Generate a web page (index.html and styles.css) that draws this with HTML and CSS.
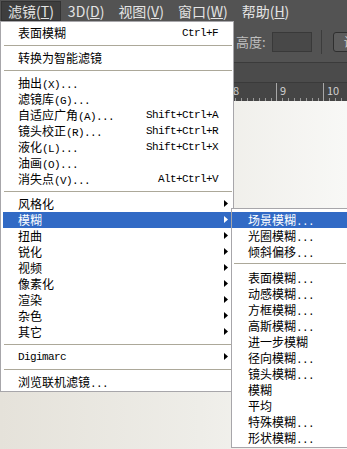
FILE: index.html
```html
<!DOCTYPE html>
<html lang="zh-CN">
<head>
  <meta charset="UTF-8" />
  <title>滤镜</title>
  <link rel="stylesheet" href="styles.css">
</head>
<body>

<div class="app">
  <nav class="menubar">
    <span class="open">滤镜(<u>T</u>)</span>
    <span>3D(<u>D</u>)</span>
    <span>视图(<u>V</u>)</span>
    <span>窗口(<u>W</u>)</span>
    <span>帮助(<u>H</u>)</span>
  </nav>
  <div class="options">
    <span class="label">高度:</span>
    <span class="field"></span>
    <span class="vr"></span>
    <span class="btn">设</span>
  </div>
  <div class="band"></div>
  <div class="ruler">
    <span>8</span><span>9</span><span>10</span>
  </div>
  <div class="desk"></div>
</div>

<div class="menu">
  <div class="item"><span>表面模糊</span><span class="key">Ctrl+F</span></div>
  <div class="sep"></div>
  <div class="item"><span>转换为智能滤镜</span></div>
  <div class="sep"></div>
  <div class="item"><span>抽出<span class="a">(X)...</span></span></div>
  <div class="item"><span>滤镜库<span class="a">(G)...</span></span></div>
  <div class="item"><span>自适应广角<span class="a">(A)...</span></span><span class="key">Shift+Ctrl+A</span></div>
  <div class="item"><span>镜头校正<span class="a">(R)...</span></span><span class="key">Shift+Ctrl+R</span></div>
  <div class="item"><span>液化<span class="a">(L)...</span></span><span class="key">Shift+Ctrl+X</span></div>
  <div class="item"><span>油画<span class="a">(O)...</span></span></div>
  <div class="item"><span>消失点<span class="a">(V)...</span></span><span class="key">Alt+Ctrl+V</span></div>
  <div class="sep"></div>
  <div class="item sub"><span>风格化</span></div>
  <div class="item sub on"><span>模糊</span>
    <div class="submenu">
      <div class="item on"><span>场景模糊<span class="a">...</span></span></div>
      <div class="item"><span>光圈模糊<span class="a">...</span></span></div>
      <div class="item"><span>倾斜偏移<span class="a">...</span></span></div>
      <div class="sep"></div>
      <div class="item"><span>表面模糊<span class="a">...</span></span></div>
      <div class="item"><span>动感模糊<span class="a">...</span></span></div>
      <div class="item"><span>方框模糊<span class="a">...</span></span></div>
      <div class="item"><span>高斯模糊<span class="a">...</span></span></div>
      <div class="item"><span>进一步模糊</span></div>
      <div class="item"><span>径向模糊<span class="a">...</span></span></div>
      <div class="item"><span>镜头模糊<span class="a">...</span></span></div>
      <div class="item"><span>模糊</span></div>
      <div class="item"><span>平均</span></div>
      <div class="item"><span>特殊模糊<span class="a">...</span></span></div>
      <div class="item"><span>形状模糊<span class="a">...</span></span></div>
    </div>
  </div>
  <div class="item sub"><span>扭曲</span></div>
  <div class="item sub"><span>锐化</span></div>
  <div class="item sub"><span>视频</span></div>
  <div class="item sub"><span>像素化</span></div>
  <div class="item sub"><span>渲染</span></div>
  <div class="item sub"><span>杂色</span></div>
  <div class="item sub"><span>其它</span></div>
  <div class="sep"></div>
  <div class="item sub"><span class="a">Digimarc</span></div>
  <div class="sep"></div>
  <div class="item"><span>浏览联机滤镜<span class="a">...</span></span></div>
</div>

</body>
</html>
```

FILE: styles.css
```css
body {
  margin: 0;
  width: 347px;
  height: 449px;
  overflow: hidden;
  position: relative;
  font-family: "Noto Sans CJK SC", sans-serif;
}
.app {
  display: flex;
  flex-direction: column;
  height: 449px;
}
.menubar {
  height: 21px;
  background: #535353;
  display: flex;
  padding-left: 1px;
  box-sizing: border-box;
  padding-top: 1px;
  flex: none;
}
.menubar span {
  padding: 0 6px;
  color: #e4e4e4;
  font-size: 14px;
  line-height: 18px;
  border: 1px solid transparent;
  white-space: nowrap;
}
.menubar .open {
  background: #3e3e3e;
  border-color: #333;
}
.options {
  height: 41px;
  background: #535353;
  border-bottom: 1px solid #3b3b3b;
  display: flex;
  align-items: center;
  padding-left: 236px;
  flex: none;
  overflow: hidden;
}
.label {
  color: #bebebe;
  font-size: 13px;
  white-space: nowrap;
  flex: none;
}
.field {
  width: 38px;
  height: 18px;
  background: #484848;
  border: 1px solid #393939;
  margin-left: 6px;
  flex: none;
}
.vr {
  width: 1px;
  height: 24px;
  background: #3c3c3c;
  margin: 0 11px 0 9px;
  flex: none;
}
.btn {
  height: 18px;
  padding: 0 6px 0 10px;
  background: #5c5c5c;
  border: 1px solid #2f2f2f;
  border-radius: 3px;
  color: #cfcfcf;
  font-size: 12px;
  line-height: 18px;
  white-space: nowrap;
  flex: none;
}
.band {
  height: 19px;
  background: #4b4b4b;
  border-bottom: 1px solid #3a3a3a;
  flex: none;
}
.ruler {
  height: 18px;
  background: #454545;
  display: flex;
  padding-left: 229px;
  flex: none;
}
.ruler span {
  width: 47px;
  flex: none;
  box-sizing: border-box;
  border-left: 1px solid #a8a8a8;
  padding-left: 3px;
  color: #d0d0d0;
  font-size: 11px;
  line-height: 14px;
  background: repeating-linear-gradient(to right, transparent 0 5px, #9a9a9a 5px 6px) bottom left / 100% 3px no-repeat;
}
.desk {
  flex: 1;
  background: linear-gradient(to right, #e5e2da 0, #eeede8 200px, #f8f8f6 347px);
}

.menu {
  position: absolute;
  left: 0;
  top: 21px;
  width: 234px;
  box-sizing: border-box;
  background: #fff;
  border: 1px solid #a7a6aa;
  padding: 3px 2px 1px 2px;
  font-size: 12px;
  color: #000;
}
.item {
  height: 16px;
  line-height: 16px;
  padding: 0 13px 0 15px;
  display: flex;
  justify-content: space-between;
  white-space: nowrap;
  position: relative;
}
.item.on {
  background: #316ac5;
  color: #fff;
}
.sep {
  height: 1px;
  background: #aca899;
  margin: 4px -1px 4px 1px;
}
.a, .key {
  font-family: "Liberation Mono", monospace;
  font-size: 11px;
  letter-spacing: -0.6px;
}
.sub::after {
  content: "";
  position: absolute;
  right: 3px;
  top: 4px;
  width: 4px;
  height: 7px;
  background: currentColor;
  clip-path: polygon(0 0, 100% 50%, 0 100%);
}
.submenu {
  position: absolute;
  left: 228px;
  top: -4px;
  width: 119px;
  box-sizing: border-box;
  background: #fff;
  color: #000;
  border: 1px solid #a7a6aa;
  padding: 3px 0 1px 0;
}
.submenu .item {
  padding-left: 16px;
}
.submenu .sep {
  margin: 3px 3px 6px 2px;
}
```
